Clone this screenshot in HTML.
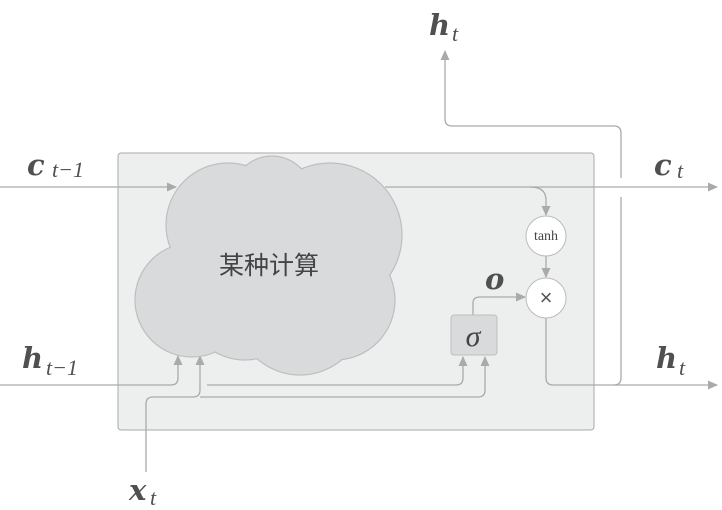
<!DOCTYPE html>
<html><head><meta charset="utf-8"><style>
html,body{margin:0;padding:0;background:#fff;width:722px;height:510px;overflow:hidden}
svg{display:block}
.lb{font-family:"DejaVu Serif",serif;font-weight:bold;font-style:italic;fill:#505050;font-size:29px}
.sb{font-family:"Liberation Serif",serif;font-style:italic;fill:#505050;font-size:22px}
</style></head><body>
<svg width="722" height="510" viewBox="0 0 722 510">
<defs><marker id="a" markerWidth="10" markerHeight="10" refX="9" refY="5" orient="auto" markerUnits="userSpaceOnUse"><path d="M0,0.5 L10,5 L0,9.5Z" fill="#aaa"/></marker></defs>
<rect x="118" y="153" width="476" height="277" rx="3" fill="#edeeee" stroke="#aaa" stroke-width="1"/>
<g fill="none" stroke="#aaa" stroke-width="1.3">
<path d="M621,178 V133 Q621,126 614,126 H452 Q445,126 445,119 V51" marker-end="url(#a)"/>
<path d="M621,197 V378 Q621,385 614,385"/>
<path d="M0,187 H176" marker-end="url(#a)"/>
<path d="M385,187 H717" marker-end="url(#a)"/>
<path d="M530,187 Q546,187 546,200 V215" marker-end="url(#a)"/>
<path d="M546,256 V277" marker-end="url(#a)"/>
<path d="M546,318 V378 Q546,385 553,385 H717" marker-end="url(#a)"/>
<path d="M473,315 V303 Q473,297 480,297 H525" marker-end="url(#a)"/>
<path d="M0,385 H171 Q178,385 178,378 V356" marker-end="url(#a)"/>
<path d="M207,385 H456 Q463,385 463,378 V357" marker-end="url(#a)"/>
<path d="M146,472 V404 Q146,397 153,397 H193 Q200,397 200,390 V356" marker-end="url(#a)"/>
<path d="M200,397 H478 Q485,397 485,390 V357" marker-end="url(#a)"/>
</g>
<g fill="#d9dadb" stroke="#bdbdbd" stroke-width="1.2">
<circle cx="228" cy="225" r="62"/><circle cx="272" cy="196" r="40"/><circle cx="330" cy="235" r="72"/>
<circle cx="192" cy="300" r="57"/><circle cx="300" cy="310" r="65"/><circle cx="245" cy="300" r="60"/><circle cx="335" cy="300" r="60"/>
</g>
<g fill="#d9dadb">
<circle cx="228" cy="225" r="61.3"/><circle cx="272" cy="196" r="39.3"/><circle cx="330" cy="235" r="71.3"/>
<circle cx="192" cy="300" r="56.3"/><circle cx="300" cy="310" r="64.3"/><circle cx="245" cy="300" r="59.3"/><circle cx="335" cy="300" r="59.3"/>
</g>
<text x="269" y="274" text-anchor="middle" font-family="'Liberation Sans','Noto Sans CJK SC',sans-serif" font-size="25" fill="#444">某种计算</text>
<circle cx="546" cy="236" r="20" fill="#fff" stroke="#bbb"/>
<text x="546" y="240" text-anchor="middle" font-family="'Liberation Serif',serif" font-size="14" fill="#444">tanh</text>
<circle cx="546" cy="298" r="20" fill="#fff" stroke="#bbb"/>
<text x="546" y="305" text-anchor="middle" font-family="'Liberation Sans',sans-serif" font-size="22" fill="#555">×</text>
<rect x="451" y="315" width="46" height="40" rx="3" fill="#d9dadb" stroke="#bdbdbd"/>
<text x="473" y="346" text-anchor="middle" font-family="'Liberation Serif',serif" font-style="italic" font-size="30" fill="#444">σ</text>
<text class="lb" x="27" y="175">c</text><text class="sb" x="52" y="177">t−1</text>
<text class="lb" x="429" y="35">h</text><text class="sb" x="452" y="41">t</text>
<text class="lb" x="654" y="175">c</text><text class="sb" x="677" y="178">t</text>
<text class="lb" x="656" y="368">h</text><text class="sb" x="679" y="375">t</text>
<text class="lb" x="22" y="368">h</text><text class="sb" x="46" y="375">t−1</text>
<text class="lb" x="129" y="500">x</text><text class="sb" x="150" y="505">t</text>
<text class="lb" x="485" y="289">o</text>
</svg>
</body></html>
